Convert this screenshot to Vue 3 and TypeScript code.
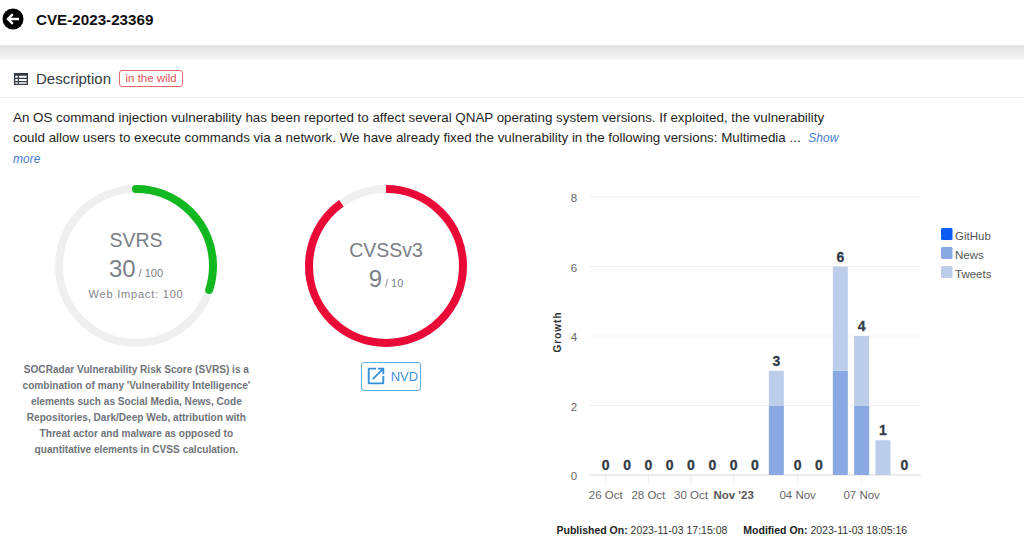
<script setup lang="ts">
const yTicks = [
  { label: '8', y: 198 },
  { label: '6', y: 267.5 },
  { label: '4', y: 337 },
  { label: '2', y: 406.5 },
  { label: '0', y: 476 },
]
const unit = 34.75
const series = [0, 0, 0, 0, 0, 0, 0, 0, [2, 1], 0, 0, [3, 3], [2, 2], [0, 1], 0] as (number | number[])[]
const bars = series.map((v, i) => {
  const parts = Array.isArray(v) ? v : [0, 0]
  return { x: 605.7 + i * 21.33, news: parts[0], tweets: parts[1], total: parts[0] + parts[1] }
})
const xTicks = [
  { i: 0, label: '26 Oct', bold: false },
  { i: 2, label: '28 Oct', bold: false },
  { i: 4, label: '30 Oct', bold: false },
  { i: 6, label: "Nov '23", bold: true },
  { i: 9, label: '04 Nov', bold: false },
  { i: 12, label: '07 Nov', bold: false },
]
const legend = [
  { name: 'GitHub', color: '#0b5cf5', y: 229 },
  { name: 'News', color: '#8aa9e2', y: 248 },
  { name: 'Tweets', color: '#bccdea', y: 267 },
]
const R = 77
const C = 2 * Math.PI * R
const svrsDash = `${C * 0.3} ${C}`
const cvssDash = `${C * 0.9} ${C}`
</script>

<template>
  <div class="page">
    <header class="top">
      <svg class="back" viewBox="0 0 22 22" width="22" height="22">
        <circle cx="11" cy="11" r="10.5" fill="#000" />
        <path d="M17 11H6.5M10.8 6.2 6 11l4.8 4.8" fill="none" stroke="#fff" stroke-width="2.4" />
      </svg>
      <h1 class="title">CVE-2023-23369</h1>
    </header>
    <div class="band"></div>
    <div class="section-head">
      <svg class="list-icon" viewBox="0 0 14 12" width="14" height="12">
        <path fill="#333a44" d="M0 0h14v12H0zM1.3 2.8v2h2.4v-2zm3.6 0v2h7.8v-2zM1.3 6v2h2.4V6zm3.6 0v2h7.8V6zM1.3 9.2v1.5h2.4V9.2zm3.6 0v1.5h7.8V9.2z" fill-rule="evenodd" />
      </svg>
      <span class="section-title">Description</span>
      <span class="badge">in the wild</span>
    </div>
    <p class="desc">
      An OS command injection vulnerability has been reported to affect several QNAP operating system versions. If exploited, the vulnerability could allow users to execute commands via a network. We have already fixed the vulnerability in the following versions: Multimedia ... <a class="more">Show more</a>
    </p>
    <div class="columns">
      <section class="col-svrs">
        <svg class="gauge" viewBox="0 0 170 170" width="170" height="170">
          <circle cx="85" cy="85" r="77" class="track" />
          <circle cx="85" cy="85" r="77" class="arc green" :stroke-dasharray="svrsDash" transform="rotate(-90 85 85)" />
          <text x="85" y="66.3" class="g-name">SVRS</text>
          <text x="85" y="96.3" class="g-val">30<tspan class="g-max" dx="3">/ 100</tspan></text>
          <text x="85" y="117.3" class="g-sub">Web Impact: 100</text>
        </svg>
        <p class="note">SOCRadar Vulnerability Risk Score (SVRS) is a combination of many 'Vulnerability Intelligence' elements such as Social Media, News, Code Repositories, Dark/Deep Web, attribution with Threat actor and malware as opposed to quantitative elements in CVSS calculation.</p>
      </section>
      <section class="col-cvss">
        <svg class="gauge" viewBox="0 0 170 170" width="170" height="170">
          <circle cx="85" cy="85" r="77" class="track" />
          <circle cx="85" cy="85" r="77" class="arc red" :stroke-dasharray="cvssDash" transform="rotate(-90 85 85)" />
          <text x="85" y="76.3" class="g-name">CVSSv3</text>
          <text x="85" y="106.3" class="g-val">9<tspan class="g-max" dx="3">/ 10</tspan></text>
        </svg>
        <a class="nvd">
          <svg viewBox="0 0 24 24" width="22" height="22">
            <path fill="#2f8fdc" d="M19 19H5V5h7V3H5a2 2 0 0 0-2 2v14a2 2 0 0 0 2 2h14a2 2 0 0 0 2-2v-7h-2v7zM14 3v2h3.6l-9.8 9.8 1.4 1.4L19 6.4V10h2V3h-7z" />
          </svg>
          <span>NVD</span>
        </a>
      </section>
      <section class="col-chart">
        <svg class="chart" viewBox="500 178 524 336" width="524" height="336">
          <g v-for="t in yTicks" :key="t.label">
            <line x1="590" x2="921" :y1="t.y" :y2="t.y" :class="t.label === '0' ? 'axis' : 'grid'" />
            <text x="574" :y="t.y + 1" class="y-label">{{ t.label }}</text>
          </g>
          <text class="y-title" transform="translate(561 333) rotate(-90)">Growth</text>
          <g v-for="t in xTicks" :key="t.i">
            <line :x1="bars[t.i].x" :x2="bars[t.i].x" y1="477" y2="484" class="tick" />
            <text :x="bars[t.i].x" y="500" :class="['x-label', { bold: t.bold }]">{{ t.label }}</text>
          </g>
          <g v-for="(b, i) in bars" :key="i">
            <rect v-if="b.news" :x="b.x - 7.5" :y="476 - b.news * unit" width="15" :height="b.news * unit" fill="#8aa9e2" />
            <rect v-if="b.tweets" :x="b.x - 7.5" :y="476 - b.total * unit" width="15" :height="b.tweets * unit" fill="#bccdea" />
            <text :x="b.x" :y="476 - b.total * unit - 5" class="data-label">{{ b.total }}</text>
          </g>
          <g v-for="l in legend" :key="l.name">
            <rect x="941" :y="l.y" width="11.5" height="12" rx="1.5" :fill="l.color" />
            <text x="955" :y="l.y + 11.5" class="legend">{{ l.name }}</text>
          </g>
        </svg>
        <div class="dates">
          <span><b>Published On:</b> 2023-11-03 17:15:08</span>
          <span><b>Modified On:</b> 2023-11-03 18:05:16</span>
        </div>
      </section>
    </div>
  </div>
</template>

<style>
html, body { margin: 0; background: #fff; }
</style>

<style scoped>
.page {
  width: 1024px;
  height: 542px;
  overflow: hidden;
  font-family: "Liberation Sans", Arial, sans-serif;
  color: #222;
  background: #fff;
}
.top {
  height: 45px;
  display: flex;
  align-items: flex-start;
  gap: 12px;
  padding: 8px 0 0 2px;
  box-sizing: border-box;
}
.title {
  margin: 3px 0 0;
  font-size: 15.2px;
  line-height: 17px;
  font-weight: 700;
  color: #111;
}
.band {
  height: 15px;
  background: linear-gradient(#e2e2e2, #ececec 55%, #f8f8f8);
}
.section-head {
  height: 38px;
  display: flex;
  align-items: center;
  padding-left: 14px;
  box-sizing: border-box;
  border-bottom: 1px solid #f1f1f1;
}
.list-icon { margin-right: 8px; }
.section-title { font-size: 15px; color: #333a44; }
.badge {
  margin-left: 8px;
  height: 17px;
  line-height: 15px;
  padding: 0 5.5px;
  box-sizing: border-box;
  border: 1px solid #e26a6a;
  border-radius: 3px;
  font-size: 11.5px;
  color: #e2505a;
}
.desc {
  width: 830px;
  margin: 0;
  padding: 10px 0 0 13px;
  font-size: 13.37px;
  line-height: 20.3px;
  color: #1f1f1f;
}
.more {
  margin-left: 4px;
  font-size: 12px;
  font-style: italic;
  color: #4a80cf;
}
.columns {
  display: flex;
  height: 364px;
  margin-top: 8px;
}
.col-svrs {
  width: 273px;
  display: flex;
  flex-direction: column;
  align-items: center;
}
.col-cvss {
  width: 226px;
  display: flex;
  flex-direction: column;
  align-items: center;
}
.gauge { display: block; margin-top: 3.7px; }
.track { fill: none; stroke: #efefef; stroke-width: 8; }
.arc { fill: none; stroke-width: 8; }
.green { stroke: #12b81f; stroke-linecap: round; }
.red { stroke: #ea0a37; }
.g-name { font-size: 19.5px; fill: #7b7f89; text-anchor: middle; }
.g-val { font-size: 24px; fill: #7b7f89; text-anchor: middle; }
.g-max { font-size: 11px; }
.g-sub { font-size: 11px; letter-spacing: .8px; fill: #7f838c; text-anchor: middle; }
.note {
  width: 240px;
  margin: 11px 0 0;
  font-size: 10.1px;
  line-height: 16px;
  font-weight: 700;
  text-align: center;
  color: #6f737a;
}
.nvd {
  margin: 11px 0 0 10px;
  width: 60px;
  height: 29px;
  box-sizing: border-box;
  display: flex;
  align-items: center;
  gap: 4px;
  padding-left: 3px;
  border: 1px solid #5cb0e8;
  border-radius: 3px;
  font-size: 13px;
  color: #3f8fdd;
}
.col-chart { width: 525px; margin-left: 1px; }
.chart { display: block; }
.grid { stroke: #eef0f3; stroke-width: 1; }
.axis { stroke: #e6e6e6; stroke-width: 1.6; }
.tick { stroke: #ececec; stroke-width: 1; }
.y-label { font-size: 11.5px; fill: #666; text-anchor: middle; dominant-baseline: central; }
.y-title { font-size: 10px; font-weight: 700; fill: #333; letter-spacing: 1px; text-anchor: middle; }
.x-label { font-size: 11.5px; fill: #666; text-anchor: middle; }
.x-label.bold { font-weight: 700; fill: #555; }
.data-label { font-size: 14px; font-weight: 700; fill: #333d47; text-anchor: middle; stroke: #333d47; stroke-width: .3px; }
.legend { font-size: 11.5px; fill: #555; }
.dates {
  display: flex;
  gap: 16px;
  padding: 10px 0 0 57px;
  font-size: 10.5px;
  line-height: 14px;
  color: #333;
}
.dates b { color: #222; }
</style>
